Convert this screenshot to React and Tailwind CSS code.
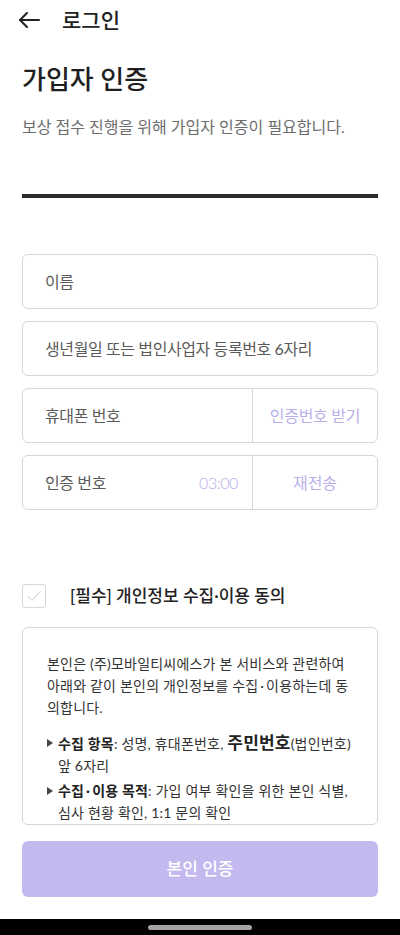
import React from 'react';

const font = { fontFamily: "Lato, 'Noto Sans CJK KR', sans-serif" };

function BackArrow() {
    return (
        <svg width="22" height="16" viewBox="0 0 22 16" fill="none" stroke="#222" strokeWidth="2" strokeLinecap="round" strokeLinejoin="round">
            <path d="M21 8H2" />
            <path d="M9 1L2 8l7 7" />
        </svg>
    );
}

function Bullet() {
    return (
        <span className="w-[11px] h-[22px] flex items-center shrink-0">
            <svg width="6" height="8" viewBox="0 0 6 8">
                <path d="M0 0L6 4L0 8Z" fill="#444" />
            </svg>
        </span>
    );
}

function Field({ label, inner, side }) {
    return (
        <div className="h-[55px] border border-[#d6d6d6] rounded-[6px] flex items-stretch">
            <div className="flex-1 flex items-center pl-[22px] pr-[14px] text-[16px] text-[#5a5a5a] tracking-[-0.4px]">
                <span className="flex-1 whitespace-nowrap">{label}</span>
                {inner}
            </div>
            {side}
        </div>
    );
}

export default function App() {
    return (
        <div className="w-[400px] h-[935px] bg-white flex flex-col overflow-hidden" style={font}>
            {/* Header */}
            <div className="h-[40px] flex items-center pl-[18px]">
                <BackArrow />
                <span className="ml-[22px] text-[21px] font-medium text-[#222]">로그인</span>
            </div>

            <div className="px-[22px] flex flex-col">
                <h1 className="mt-[20px] text-[26px] leading-[40px] font-medium text-[#1f1f1f]">가입자 인증</h1>
                <p className="mt-[16px] text-[16px] leading-[24px] text-[#6d6d6d] whitespace-nowrap">보상 접수 진행을 위해 가입자 인증이 필요합니다.</p>
                <div className="mt-[55px] h-[4px] bg-[#2b2b30]" />

                {/* Inputs */}
                <div className="mt-[56px] flex flex-col gap-[12px]">
                    <Field label="이름" />
                    <Field label="생년월일 또는 법인사업자 등록번호 6자리" />
                    <Field
                        label="휴대폰 번호"
                        side={
                            <div className="w-[125px] border-l border-[#d6d6d6] flex items-center justify-center text-[16px] text-[#b9b0ea] tracking-[-0.3px] whitespace-nowrap">
                                인증번호 받기
                            </div>
                        }
                    />
                    <Field
                        label="인증 번호"
                        inner={<span className="text-[16px] text-[#b9b0ea] font-light">03:00</span>}
                        side={
                            <div className="w-[125px] border-l border-[#d6d6d6] flex items-center justify-center text-[16px] text-[#b9b0ea]">
                                재전송
                            </div>
                        }
                    />
                </div>

                {/* Agreement */}
                <div className="mt-[74px] h-[24px] flex items-center">
                    <div className="w-[24px] h-[24px] border border-[#d6d6d6] rounded-[3px] flex items-center justify-center">
                        <svg width="14" height="12" viewBox="0 0 14 12" fill="none" stroke="#c8c8c8" strokeWidth="1" strokeLinecap="round" strokeLinejoin="round">
                            <path d="M1 6.5L5 10.5L13 1.5" />
                        </svg>
                    </div>
                    <span className="ml-[24px] text-[17px] font-medium text-[#222] whitespace-nowrap">[필수] 개인정보 수집·이용 동의</span>
                </div>

                <div className="mt-[19px] h-[198px] border border-[#d6d6d6] rounded-[6px] pt-[25px] px-[24px] text-[14px] leading-[22px] text-[#333] tracking-[0.2px] overflow-hidden">
                    <p>
                        <span className="block whitespace-nowrap">본인은 (주)모바일티씨에스가 본 서비스와 관련하여</span>
                        <span className="block whitespace-nowrap">아래와 같이 본인의 개인정보를 수집{'\u2009·\u2009'}이용하는데 동</span>
                        <span className="block whitespace-nowrap">의합니다.</span>
                    </p>
                    <ul className="mt-[13px] flex flex-col gap-[3px]">
                        <li className="flex">
                            <Bullet />
                            <div>
                                <span className="block whitespace-nowrap">
                                    <b className="font-bold text-[#222]">수집 항목</b>: 성명, 휴대폰번호, <b className="font-bold text-[17px] text-[#222]">주민번호</b>(법인번호)
                                </span>
                                <span className="block">앞 6자리</span>
                            </div>
                        </li>
                        <li className="flex">
                            <Bullet />
                            <div>
                                <span className="block whitespace-nowrap">
                                    <b className="font-bold text-[#222]">수집{'\u2009·\u2009'}이용 목적</b>: 가입 여부 확인을 위한 본인 식별,
                                </span>
                                <span className="block">심사 현황 확인, 1:1 문의 확인</span>
                            </div>
                        </li>
                    </ul>
                </div>

                <button className="mt-[16px] h-[56px] rounded-[6px] bg-[#c3b9ef] text-white text-[17px] font-medium">
                    본인 인증
                </button>
            </div>

            <div className="mt-[22px] h-[16px] bg-black flex justify-center pt-[6px]">
                <div className="w-[104px] h-[5px] rounded-full bg-[#a3a3a3]" />
            </div>
        </div>
    );
}
